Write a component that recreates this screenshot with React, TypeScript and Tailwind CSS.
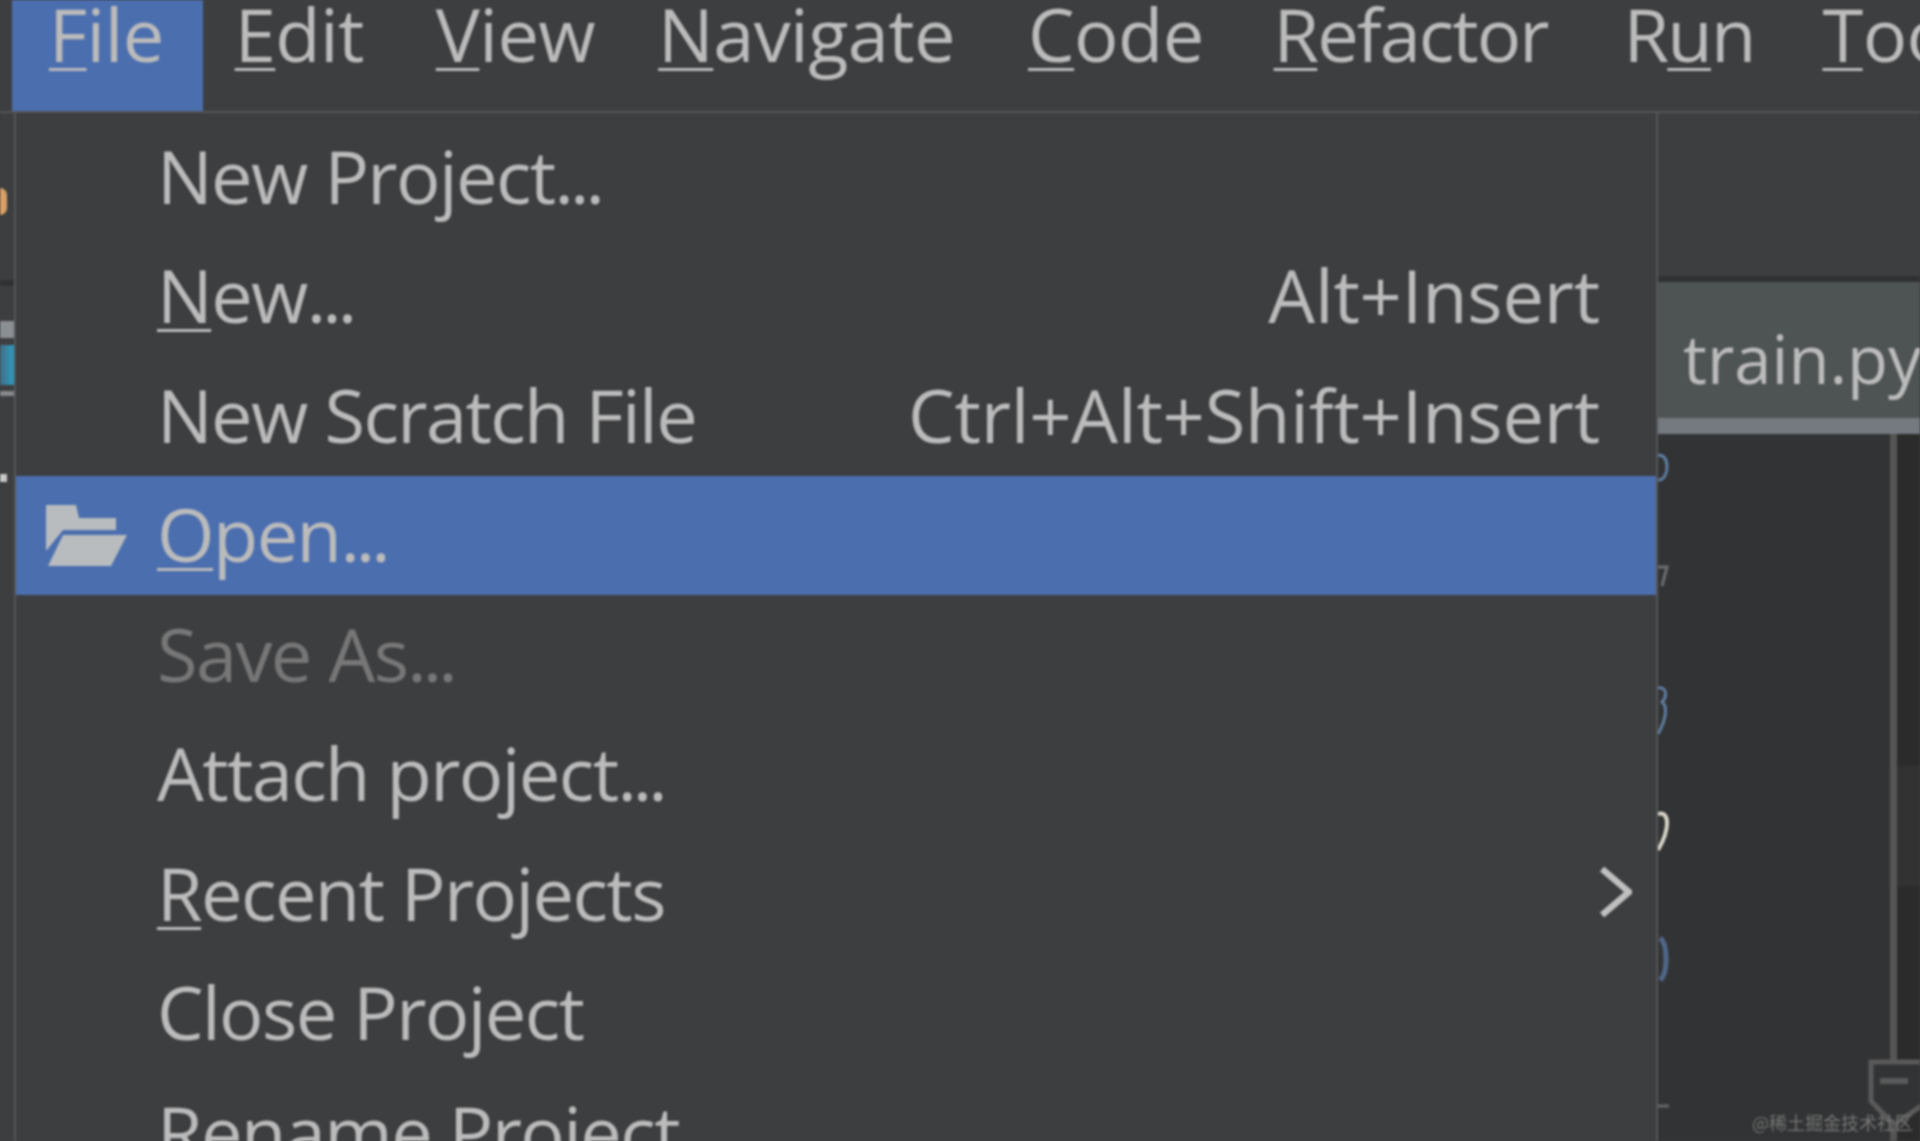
const menus = [
  { pre: "", key: "F", post: "ile", cls: "bg-[#4b6eaf] pl-[37px] pr-[39px]" },
  { pre: "", key: "E", post: "dit", cls: "pl-[32px] pr-[35px]" },
  { pre: "", key: "V", post: "iew", cls: "pl-[37px] pr-[35px]" },
  { pre: "", key: "N", post: "avigate", cls: "pl-[28px] pr-[35px]" },
  { pre: "", key: "C", post: "ode", cls: "pl-[38px] pr-[35px]" },
  { pre: "", key: "R", post: "efactor", cls: "pl-[35px] pr-[35px] tracking-[-2px]" },
  { pre: "R", key: "u", post: "n", cls: "pl-[41px] pr-[35px] tracking-[-1.8px]" },
  { pre: "", key: "T", post: "ools", cls: "pl-[33px] pr-[35px]" },
]

const rows = [
  { pre: "", key: "", post: "New Project..." },
  { pre: "", key: "N", post: "ew...", shortcut: "Alt+Insert" },
  { pre: "", key: "", post: "New Scratch File", shortcut: "Ctrl+Alt+Shift+Insert" },
  { pre: "", key: "O", post: "pen...", active: true },
  { pre: "", key: "", post: "Save As...", disabled: true },
  { pre: "", key: "", post: "Attach project..." },
  { pre: "", key: "R", post: "ecent Projects", submenu: true },
  { pre: "", key: "", post: "Close Project" },
  { pre: "", key: "", post: "Rename Project" },
]

function Mnemonic({ pre, letter, post }: { pre: string; letter: string; post: string }) {
  // the ellipsis sits tighter in the original font
  const hasDots = post.endsWith("...")
  return (
    <span>
      {pre}
      {letter && <span className="underline decoration-[3px] underline-offset-[6px]">{letter}</span>}
      {hasDots ? post.slice(0, -3) : post}
      {hasDots && <span className="tracking-[-4px]">...</span>}
    </span>
  )
}

function FolderIcon() {
  return (
    <svg width="81" height="61" viewBox="0 0 81 61" fill="#b9bcbe">
      <path d="M0 0H30L33 13H70V25H17L0 46Z" />
      <path d="M17 30H81L65 61H2Z" />
    </svg>
  )
}

function LeftStrip() {
  return (
    <div className="flex w-[14px] shrink-0 flex-col bg-[#3d3e40]">
      <div className="mt-[75px] h-[27px] w-[7px] rounded-r-full bg-[#d9a066]" />
      <div className="mt-[65px] h-[6px] w-full bg-[#2f3133]" />
      <div className="mt-[35px] h-[17px] w-full bg-[#8a8f93]" />
      <div className="mt-[7px] h-[40px] w-full bg-gradient-to-r from-[#3f6f85] to-[#2a9bc0]" />
      <div className="mt-[6px] h-[5px] w-full bg-[#85898c]" />
      <div className="mt-[78px] h-[8px] w-[7px] bg-[#c8c8c8]" />
    </div>
  )
}

function GutterSlivers() {
  return (
    <svg width="14" height="707" viewBox="0 0 14 707" fill="none" stroke="#5f7da3" strokeWidth="3" className="shrink-0">
      <path d="M0 21C7 21 9 27 9 33C9 40 6 46 0 46" />
      <path d="M0 133L9 133L4 152" stroke="#6b6f72" />
      <path d="M0 254C8 252 10 262 4 268C10 272 8 286 0 300" />
      <path d="M0 380C12 376 12 396 0 416" stroke="#d8d4c8" strokeWidth="4" />
      <path d="M2 504C10 510 10 540 2 546" stroke="#50678a" strokeWidth="5" />
      <path d="M0 672H11" stroke="#666" strokeWidth="3" />
    </svg>
  )
}

export default function App() {
  return (
    <div className="h-[1141px] w-[1920px] overflow-hidden bg-[#3d3e40]">
      <div className="flex h-full flex-col text-[74px] leading-none text-[#bbbbbb] blur-[1px] [font-family:'Open_Sans',sans-serif]">
        <div className="flex h-[113px] shrink-0 whitespace-nowrap border-b-2 border-[#535557] pl-[12px] leading-[68px] tracking-[-0.6px]">
          {menus.map((m) => (
            <div key={m.pre + m.key + m.post} className={`flex items-start ${m.cls}`}>
              <Mnemonic pre={m.pre} letter={m.key} post={m.post} />
            </div>
          ))}
        </div>

        <div className="flex min-h-0 flex-1">
          <LeftStrip />

          <div className="w-[1644px] shrink-0 border-x-2 border-[#555759] pt-[4px]">
            {rows.map((r) => (
              <div
                key={r.post}
                className={`flex h-[119.5px] items-center pr-[24px] ${r.active ? "bg-[#4b6eaf]" : ""} ${r.disabled ? "text-[#777777]" : ""}`}
              >
                <div className="flex w-[141px] shrink-0 justify-end pr-[30px]">
                  {r.active && <FolderIcon />}
                </div>
                <div className="flex-1 whitespace-nowrap pb-[2px] tracking-[-1.6px]">
                  <Mnemonic pre={r.pre} letter={r.key} post={r.post} />
                </div>
                {r.shortcut && <div className="whitespace-nowrap pb-[2px] tracking-[-0.2px]">{r.shortcut}</div>}
                <div className="flex w-[32px] shrink-0 justify-end pb-[4px]">
                  {r.submenu && (
                    <svg width="32" height="50" viewBox="0 0 32 50" fill="none" stroke="#c0c0c0" strokeWidth="6.5">
                      <path d="M2 2L29 25L2 48" />
                    </svg>
                  )}
                </div>
              </div>
            ))}
          </div>

          <div className="relative flex min-w-0 flex-1 flex-col overflow-hidden">
            <div className="h-[163px] shrink-0 bg-[#3d3e40]" />
            <div className="h-[6px] shrink-0 bg-[#2f3133]" />
            <div className="flex h-[136px] shrink-0 items-center whitespace-nowrap bg-[#4e5354] pl-[25px] pt-[16px] text-[67px]">
              train.py
            </div>
            <div className="h-[16px] shrink-0 bg-[#747a80]" />
            <div className="flex min-h-0 flex-1">
              <div className="w-[232px] shrink-0 bg-[#323334]">
                <GutterSlivers />
              </div>
              <div className="w-[7px] shrink-0 bg-[#555555]" />
              <div className="flex-1 bg-[#2b2b2b] pt-[332px]">
                <div className="h-[120px] bg-[#323232]" />
              </div>
            </div>

            <svg
              className="absolute left-[210px] top-[946px]"
              width="52"
              height="66"
              viewBox="0 0 52 66"
              fill="#323334"
              stroke="#5a5a5a"
              strokeWidth="5"
            >
              <path d="M3 3H60V42L26 66L3 42Z" />
              <path d="M12 22H40" strokeWidth="6" />
            </svg>
            <div className="absolute left-[94px] top-[996px] whitespace-nowrap text-[18px] leading-normal text-[#757575] [font-family:'Noto_Sans_CJK_SC',sans-serif]">
              @稀土掘金技术社区
            </div>
          </div>
        </div>
      </div>
    </div>
  )
}
